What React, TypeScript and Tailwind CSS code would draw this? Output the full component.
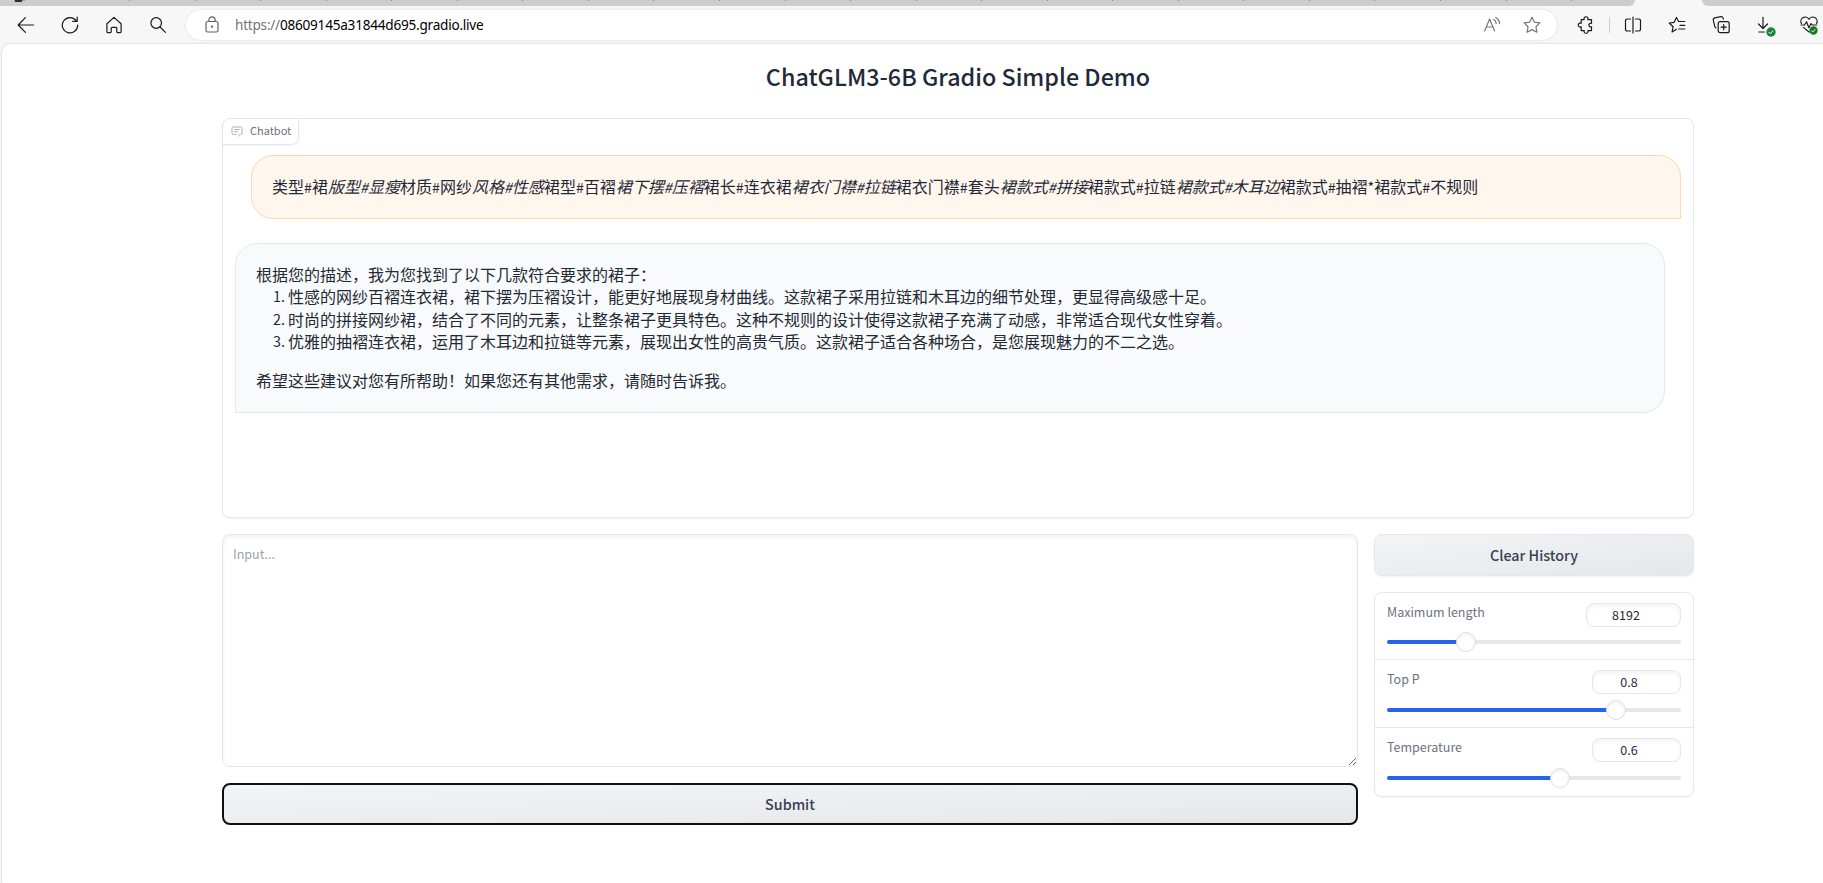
import React from "react";

const SEPARATORS = Array.from({ length: 23 }, (_, i) => 129 + i * 65.55);

function Icon({ size = 18, className = "", children }: { size?: number; className?: string; children: React.ReactNode }) {
  return (
    <svg
      width={size}
      height={size}
      viewBox="0 0 18 18"
      fill="none"
      stroke="currentColor"
      strokeWidth="1.2"
      strokeLinecap="round"
      strokeLinejoin="round"
      className={"shrink-0 " + className}
    >
      {children}
    </svg>
  );
}

function TabStrip() {
  return (
    <div className="relative flex h-[6px] shrink-0 justify-between bg-[#f7f7f7]">
      <div className="h-full w-[1635px] rounded-br-[6px] bg-[#cdcdcd]" />
      <div className="h-full w-[121px] rounded-bl-[6px] bg-[#cdcdcd]" />
      <svg className="absolute top-0 left-0" width="1823" height="2">
        {SEPARATORS.map((x) => (
          <rect key={x} x={Math.round(x)} y="0" width="1" height="1" fill="#8a8a8a" />
        ))}
        <rect x="14" y="0" width="3" height="1" fill="#8d8f96" />
        <rect x="15" y="0" width="7" height="2" fill="#2b3040" />
        <rect x="22" y="0" width="3" height="1" fill="#c98a80" />
      </svg>
    </div>
  );
}

function Toolbar() {
  return (
    <div className="flex h-[38px] shrink-0 items-center text-[#1b1b1b]">
      <div className="flex w-[186px] items-center gap-[26px] pl-[17px]">
        <Icon><path d="M8.4 1.6 1.2 9l7.200 7.400M1.400 9h15.200" /></Icon>
        <Icon><path d="M15 4.400A7.700 7.700 0 1 0 16.700 9M16.200 1v4.300h-4.500" /></Icon>
        <Icon><path d="M1.900 7.800 9 1.400l7.100 6.400v8a.8.8 0 0 1-.8.8h-2.700a.8.8 0 0 1-.8-.8v-3.500a1 1 0 0 0-1-1H7.200a1 1 0 0 0-1 1v3.500a.8.8 0 0 1-.8.8H2.700a.8.8 0 0 1-.8-.8z" /></Icon>
        <Icon><circle cx="7.200" cy="7" r="5.300" /><path d="m11.100 11 5.400 5.400" /></Icon>
      </div>
      <div className="flex h-[30px] w-[1371px] items-center rounded-full bg-white pr-[16px] pl-[17px] shadow-[0_0_3px_rgba(0,0,0,0.12)]">
        <Icon className="text-[#5f5f5f]">
          <rect x="3" y="5.500" width="12" height="10.500" rx="1.800" />
          <path d="M5.900 5.500V4a3.100 3.100 0 0 1 6.200 0v1.500" />
          <circle cx="9" cy="10.600" r=".6" fill="currentColor" />
        </Icon>
        <span className="ml-[14px] font-['Noto_Sans',sans-serif] text-[13.6px] tracking-[-0.24px] whitespace-nowrap text-black">
          <span className="text-[#757575]">https://</span>08609145a31844d695.gradio.live
        </span>
        <Icon className="ml-auto text-[#767676]">
          <path d="M1.600 15 6.600 3l5 12M3.400 11h6.600M10.800 3.400c1.500 1 2.300 2.400 2.400 4.200M12.800 1.400c2.300 1.400 3.600 3.400 3.800 6.200" />
        </Icon>
        <Icon className="ml-[22px] text-[#767676]">
          <path d="m9 1.200 2.400 5 5.400.7-3.900 3.800 1 5.500L9 13.600l-4.900 2.600 1-5.500L1.200 6.900l5.400-.7z" />
        </Icon>
      </div>
      <div className="flex items-center pl-[20px]">
        <Icon>
          <path d="M4.200 3.600h3a2 2 0 1 1 3.600 0h3.700v3.700a1.900 1.900 0 1 0 0 3.500v3.800h-3.600a2 2 0 1 1-3.700 0h-3v-3.800a2 2 0 1 1 0-3.500z" />
        </Icon>
        <div className="ml-[14px] h-[16px] w-px bg-[#cfcfcf]" />
        <Icon className="ml-[14px]">
          <path d="M6.500 3H3.200a1.700 1.700 0 0 0-1.700 1.700v8.600A1.700 1.700 0 0 0 3.200 15h3.300M9 1v16M11.500 3h3.300a1.700 1.700 0 0 1 1.700 1.700v8.600a1.700 1.700 0 0 1-1.700 1.700h-3.300" />
        </Icon>
        <Icon className="ml-[26px]">
          <path d="m8.500 13.300-4.400 2.600 1-5.200L1.200 7l5-.7 2.300-4.800 2.100 4h6.200M12 9.300h4.800M10.800 13h6" />
        </Icon>
        <Icon className="ml-[26px]">
          <path d="M4 12a2 2 0 0 1-1.200-1.400L1.300 4.200a2 2 0 0 1 1.500-2.300l6-1.200a2 2 0 0 1 2.300 1.500l.3 1" />
          <rect x="6.200" y="5.700" width="11" height="11" rx="2" />
          <path d="M11.700 8.600v5.200M9.100 11.200h5.200" />
        </Icon>
        <div className="relative ml-[27px] flex">
          <Icon><path d="M6 1.300v11M1.500 8 6 12.500 10.500 8M1.800 16h5.600" /></Icon>
          <svg className="absolute top-[11px] left-[9px]" width="10" height="10" viewBox="0 0 10 10">
            <circle cx="5" cy="5" r="4.700" fill="#1c8440" />
            <path d="m2.800 5 1.500 1.600 2.800-3" stroke="#fff" strokeWidth="1" fill="none" />
          </svg>
        </div>
        <div className="relative ml-[25px] flex">
          <Icon>
            <path d="M1.400 7.400A4.200 4.200 0 0 1 9 3.300a4.200 4.200 0 0 1 7.600 4.100M1 9h3.500l2-3.200 2.400 6L11 7.500 12.200 9h4.600M3.500 11.400 9 16" />
          </Icon>
          <svg className="absolute top-[10px] left-[9px]" width="9" height="9" viewBox="0 0 10 10">
            <circle cx="5" cy="5" r="4.600" fill="#157a1f" />
            <path d="m2.800 5 1.500 1.600 2.800-3" stroke="#fff" strokeWidth="1" fill="none" />
          </svg>
        </div>
      </div>
    </div>
  );
}

const PROMPT: [string, boolean][] = [
  ["类型#裙", false],
  ["版型#显瘦", true],
  ["材质#网纱", false],
  ["风格#性感", true],
  ["裙型#百褶", false],
  ["裙下摆#压褶", true],
  ["裙长#连衣裙", false],
  ["裙衣门襟#拉链", true],
  ["裙衣门襟#套头", false],
  ["裙款式#拼接", true],
  ["裙款式#拉链", false],
  ["裙款式#木耳边", true],
  ["裙款式#抽褶*裙款式#不规则", false],
];

function Tagged({ text }: { text: string }) {
  return (
    <>
      {text.split(/([#*])/).map((part, i) =>
        part === "#" || part === "*" ? (
          <span key={i} className="text-[14.3px] leading-none">{part}</span>
        ) : (
          part
        ),
      )}
    </>
  );
}

const ANSWERS = [
  "性感的网纱百褶连衣裙，裙下摆为压褶设计，能更好地展现身材曲线。这款裙子采用拉链和木耳边的细节处理，更显得高级感十足。",
  "时尚的拼接网纱裙，结合了不同的元素，让整条裙子更具特色。这种不规则的设计使得这款裙子充满了动感，非常适合现代女性穿着。",
  "优雅的抽褶连衣裙，运用了木耳边和拉链等元素，展现出女性的高贵气质。这款裙子适合各种场合，是您展现魅力的不二之选。",
];

function Chatbot() {
  return (
    <section className="h-[400px] rounded-lg border border-[#e5e7eb] bg-white shadow-[0_1px_2px_rgba(0,0,0,0.05)]">
      <div className="flex h-[26px] w-[76px] items-center rounded-tl-lg rounded-br-lg border-r border-b border-[#e5e7eb] pb-px pl-[8px] text-[#6b7280] shadow-[0_1px_2px_rgba(0,0,0,0.05)]">
        <svg width="12" height="12" viewBox="0 0 12 12" fill="none" stroke="#a9adb5" strokeWidth="1">
          <path d="M5.500 9.500h-3A1.500 1.500 0 0 1 1 8V3.500A1.500 1.500 0 0 1 2.500 2h7A1.500 1.500 0 0 1 11 3.500V8a1.500 1.500 0 0 1-1.500 1.500H8.500l-1.500 2M3.300 4.500h5.400M3.300 6.700h3.700" />
        </svg>
        <span className="ml-[7px] pb-px text-[11px] leading-none">Chatbot</span>
      </div>
      <div className="flex flex-col gap-6 px-[12px] pt-[10px] text-base leading-[22.4px] whitespace-nowrap text-[#1f2937]">
        <div className="ml-[16px] h-[64px] rounded-[22px] rounded-br-none border border-[#fed7aa] bg-[#fff7ed] px-[20px] pt-[19px]">
          {PROMPT.map(([text, italic], i) =>
            italic ? (
              <em key={i}><Tagged text={text} /></em>
            ) : (
              <Tagged key={i} text={text} />
            ),
          )}
        </div>
        <div className="mr-[16px] h-[170px] rounded-[22px] rounded-bl-none border border-[#e5e7eb] bg-[#f9fafb] px-[20px] pt-[19px]">
          <p>根据您的描述，我为您找到了以下几款符合要求的裙子：</p>
          <ol className="mb-4">
            {ANSWERS.map((text, i) => (
              <li key={text} className="flex">
                <span className="w-[32px] pr-[3px] text-right text-[14.3px]">{i + 1}.</span>
                <span>{text}</span>
              </li>
            ))}
          </ol>
          <p>希望这些建议对您有所帮助！如果您还有其他需求，请随时告诉我。</p>
        </div>
      </div>
    </section>
  );
}

interface SliderProps {
  label: string;
  value: string;
  percent: number;
  first?: boolean;
}

function SliderRow({ label, value, percent, first }: SliderProps) {
  return (
    <div className={(first ? "h-[67px]" : "h-[68px]") + " px-[12px] pt-[10px]"}>
      <div className="flex justify-between">
        <span className="text-[12.5px] leading-[18px] text-[#6b7280]">{label}</span>
        <span
          className={
            (first ? "w-[95px]" : "w-[89px]") +
            " flex h-[24px] items-center justify-center rounded-lg border border-[#e5e7eb] pr-[15px] text-[12.5px] leading-[20px] text-[#1f2937] shadow-[inset_0_2px_4px_rgba(0,0,0,0.05)]"
          }
        >
          {value}
        </span>
      </div>
      <div className={(first ? "mt-[13px]" : "mt-[14px]") + " relative h-[4px] rounded-full bg-[#e5e7eb]"}>
        <div className="h-full rounded-full bg-[#2563eb]" style={{ width: `${percent}%` }} />
        <div
          className="absolute top-[-8px] -ml-[10px] size-[20px] rounded-full border border-[#dcdde0] bg-white shadow-[inset_0_2px_4px_rgba(0,0,0,0.06)]"
          style={{ left: `${percent}%` }}
        />
      </div>
    </div>
  );
}

export default function App() {
  return (
    <div className="flex h-[883px] w-[1823px] flex-col overflow-hidden bg-[#f7f7f7] font-['Noto_Sans_CJK_SC',sans-serif]">
      <TabStrip />
      <Toolbar />
      <main className="ml-[2px] flex-1 rounded-tl-[8px] bg-white pr-[129px] pl-[220px] shadow-[0_0_2px_rgba(0,0,0,0.25)]">
        <h1 className="flex h-[74px] items-center justify-center pb-[10px] text-[23.3px] font-medium text-[#1f2937]">
          ChatGLM3-6B Gradio Simple Demo
        </h1>
        <Chatbot />
        <div className="mt-4 flex items-start gap-4">
          <div className="flex w-[1136px] flex-col gap-4">
            <textarea
              placeholder="Input..."
              className="block h-[233px] w-full rounded-lg border border-[#e5e7eb] px-[10px] pt-[9px] text-[12.5px] leading-[20px] shadow-[inset_0_2px_4px_rgba(0,0,0,0.05)] placeholder:text-[#9ca3af]"
            />
            <button className="h-[42px] rounded-lg border-2 border-[#101010] bg-linear-to-br from-[#f3f4f6] to-[#e5e7eb] pb-px text-[14.3px] font-medium text-[#374151]">
              Submit
            </button>
          </div>
          <div className="flex w-[320px] flex-col gap-4">
            <button className="h-[42px] rounded-lg border border-[#e5e7eb] bg-linear-to-br from-[#f3f4f6] to-[#e5e7eb] pb-px text-[14.3px] font-medium text-[#374151] shadow-[0_1px_2px_rgba(0,0,0,0.05)]">
              Clear History
            </button>
            <div className="divide-y divide-[#e5e7eb] rounded-lg border border-[#e5e7eb] shadow-[0_1px_2px_rgba(0,0,0,0.05)]">
              <SliderRow label="Maximum length" value="8192" percent={26.9} first />
              <SliderRow label="Top P" value="0.8" percent={78} />
              <SliderRow label="Temperature" value="0.6" percent={58.9} />
            </div>
          </div>
        </div>
      </main>
    </div>
  );
}
